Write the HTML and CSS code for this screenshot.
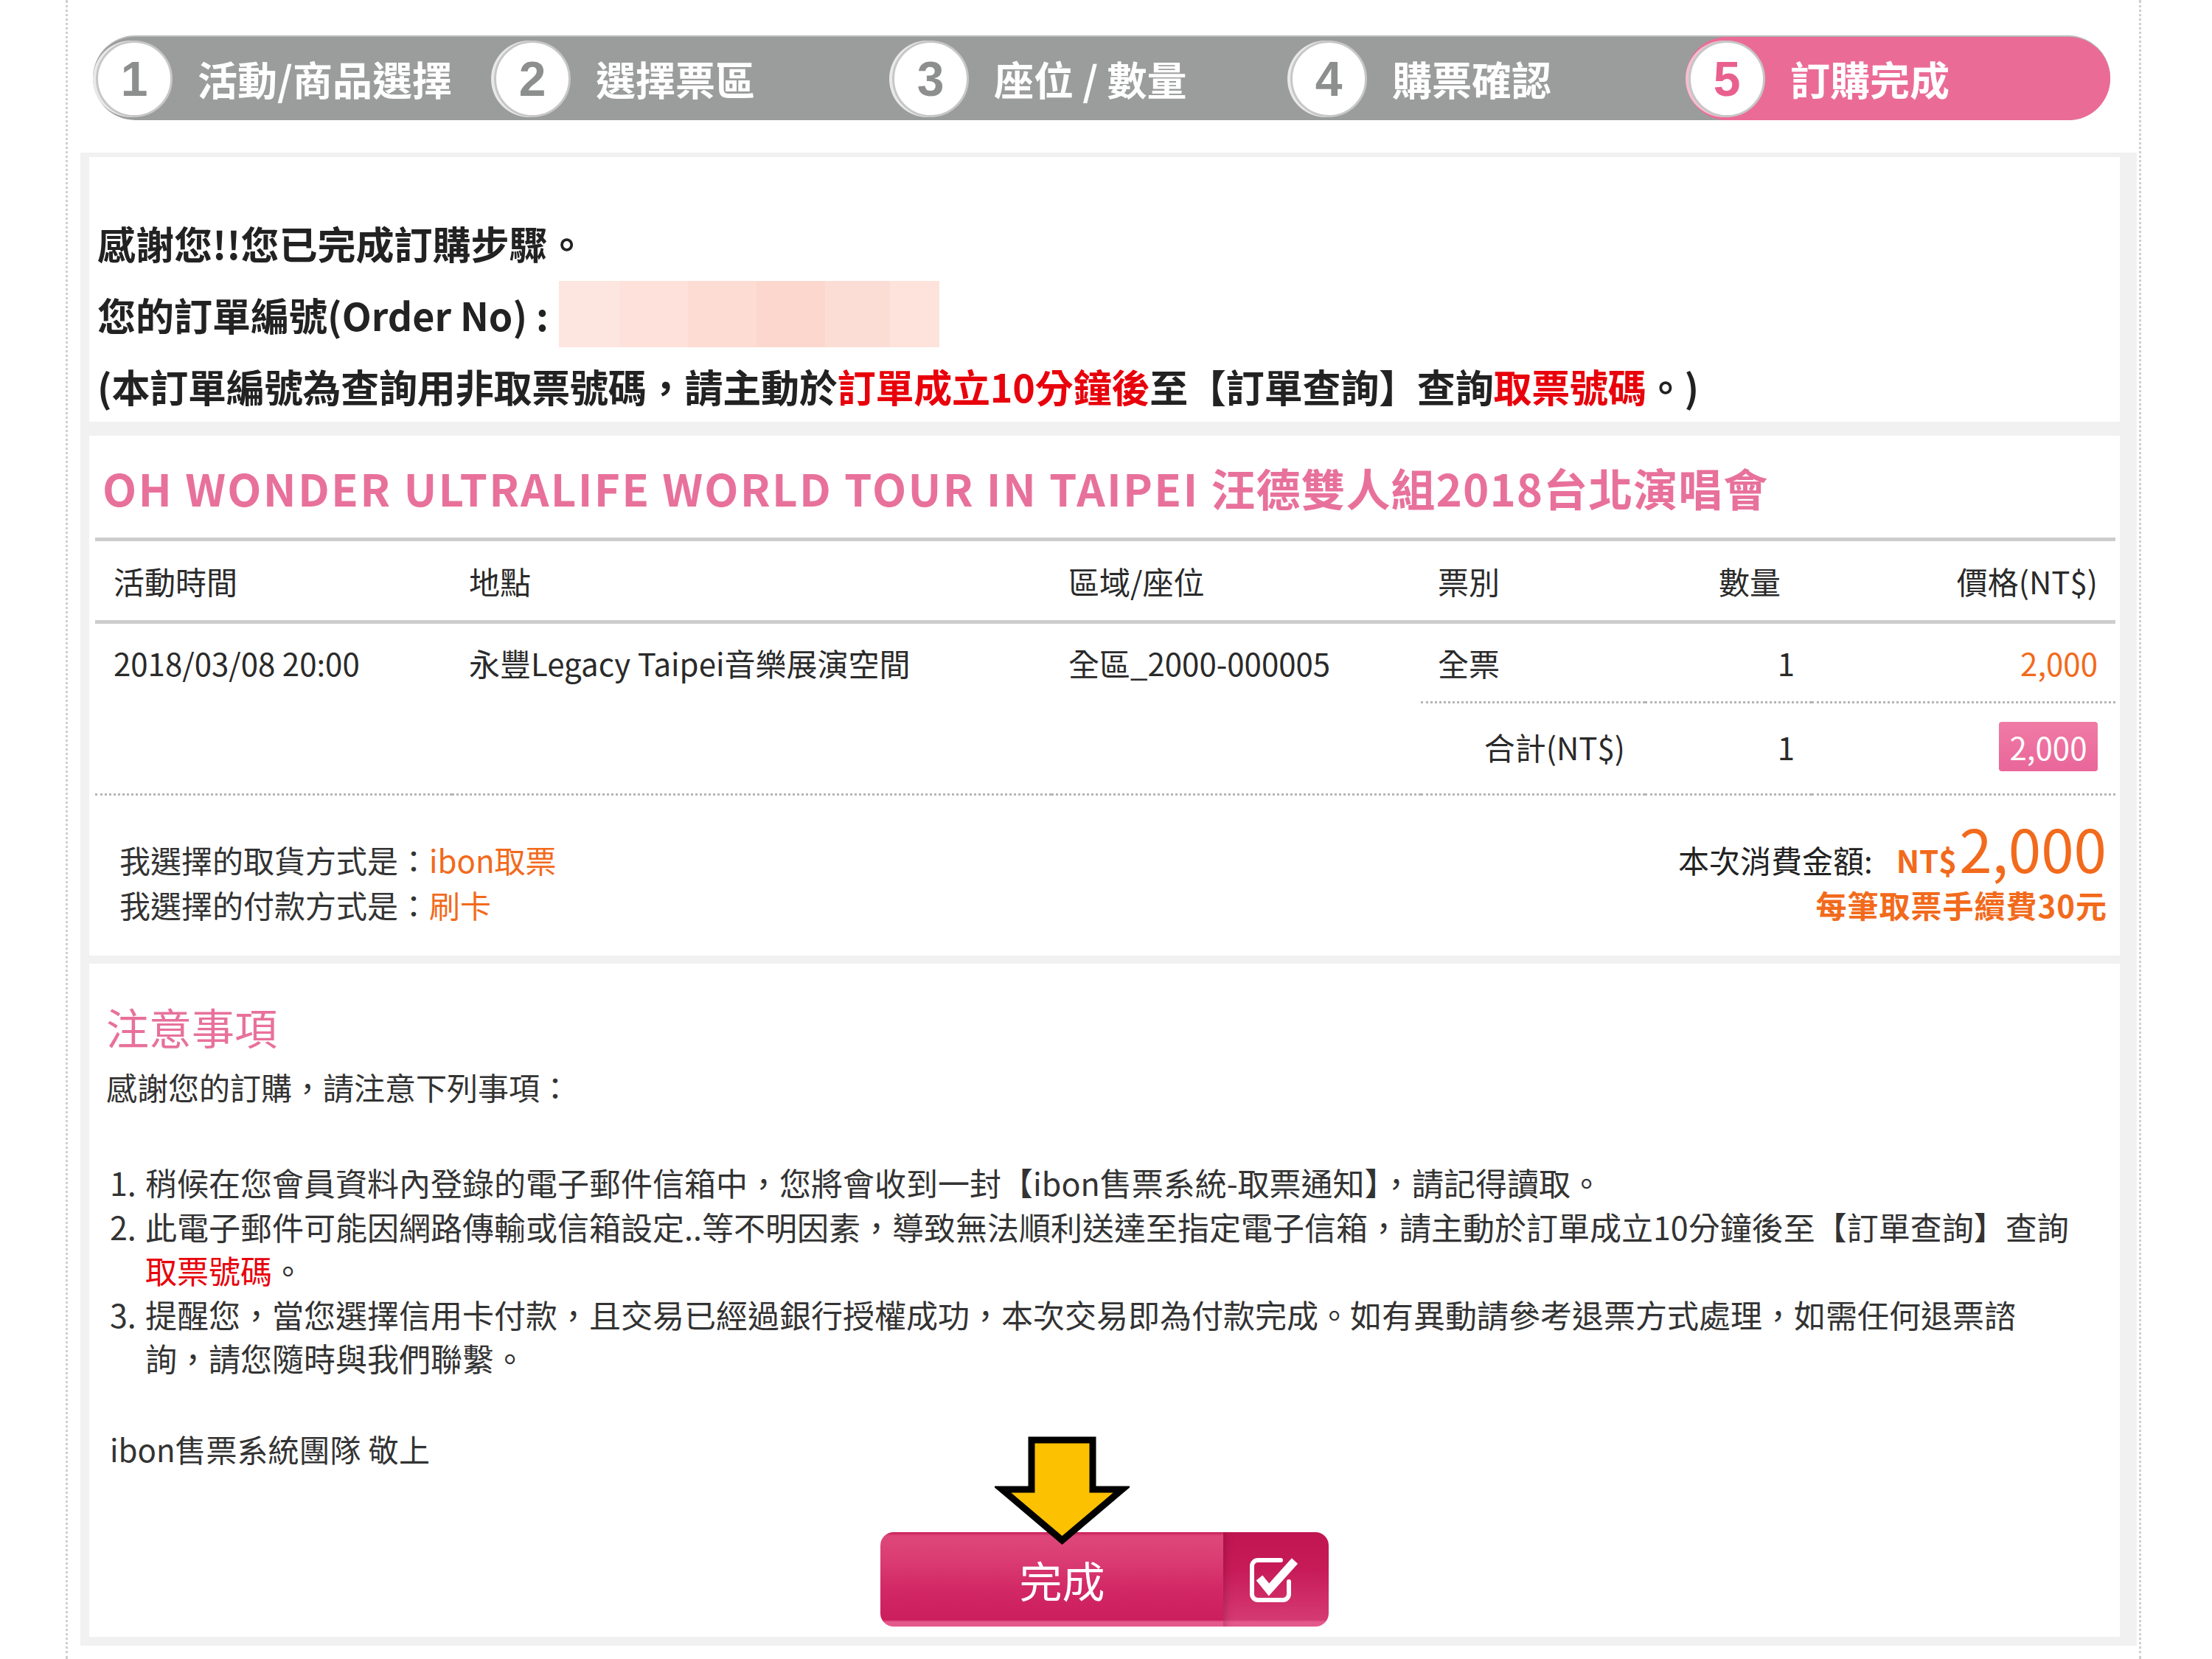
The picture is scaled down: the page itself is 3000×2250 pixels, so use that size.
FILE: index.html
```html
<!DOCTYPE html>
<html lang="zh-Hant">
<head>
<meta charset="utf-8">
<title>訂購完成</title>
<link rel="stylesheet" href="styles.css">
</head>
<body>
<div class="page">
  <ol class="steps">
    <li class="step"><span class="num">1</span><span class="label">活動/商品選擇</span></li>
    <li class="step"><span class="num">2</span><span class="label">選擇票區</span></li>
    <li class="step"><span class="num">3</span><span class="label">座位 / 數量</span></li>
    <li class="step"><span class="num">4</span><span class="label">購票確認</span></li>
    <li class="step active"><span class="num">5</span><span class="label">訂購完成</span></li>
  </ol>

  <div class="content">
    <section class="panel thanks">
      <p>感謝您!!您已完成訂購步驟。</p>
      <p>您的訂單編號(Order No) :<span class="order-no"></span></p>
      <p>(本訂單編號為查詢用非取票號碼，請主動於<em>訂單成立10分鐘後</em>至【訂單查詢】查詢<em>取票號碼</em>。)</p>
    </section>

    <section class="panel order">
      <h1 class="event-title"><span class="latin">OH WONDER ULTRALIFE WORLD TOUR IN TAIPEI </span><span class="cjk">汪德雙人組2018台北演唱會</span></h1>
      <div class="tickets">
        <div class="th c1">活動時間</div>
        <div class="th c2">地點</div>
        <div class="th c3">區域/座位</div>
        <div class="th c4">票別</div>
        <div class="th c5">數量</div>
        <div class="th c6">價格(NT$)</div>

        <div class="td c1">2018/03/08 20:00</div>
        <div class="td c2">永豐Legacy Taipei音樂展演空間</div>
        <div class="td c3">全區_2000-000005</div>
        <div class="td c4 dot">全票</div>
        <div class="td c5 dot">1</div>
        <div class="td c6 dot price">2,000</div>

        <div class="tt c1"></div>
        <div class="tt c2"></div>
        <div class="tt c3"></div>
        <div class="tt c4">合計(NT$)</div>
        <div class="tt c5">1</div>
        <div class="tt c6"><span class="total-box">2,000</span></div>
      </div>

      <div class="summary">
        <div class="methods">
          <div>我選擇的取貨方式是：<span class="val">ibon取票</span></div>
          <div>我選擇的付款方式是：<span class="val">刷卡</span></div>
        </div>
        <div class="pay-total">
          <div class="total-line"><span class="total-label">本次消費金額:</span><span class="nt">NT$</span><span class="amount">2,000</span></div>
          <div class="fee">每筆取票手續費30元</div>
        </div>
      </div>
    </section>

    <section class="panel notes">
      <h2 class="notes-title">注意事項</h2>
      <p class="intro">感謝您的訂購，請注意下列事項：</p>
      <ol class="notice-list">
        <li><span class="no">1.</span><span class="txt">稍候在您會員資料內登錄的電子郵件信箱中，您將會收到一封【ibon售票系統-取票通知】，請記得讀取。</span></li>
        <li><span class="no">2.</span><span class="txt">此電子郵件可能因網路傳輸或信箱設定..等不明因素，導致無法順利送達至指定電子信箱，請主動於訂單成立10分鐘後至【訂單查詢】查詢<br><em>取票號碼</em>。</span></li>
        <li><span class="no">3.</span><span class="txt">提醒您，當您選擇信用卡付款，且交易已經過銀行授權成功，本次交易即為付款完成。如有異動請參考退票方式處理，如需任何退票諮<br>詢，請您隨時與我們聯繫。</span></li>
      </ol>
      <p class="sign">ibon售票系統團隊 敬上</p>

      <div class="actions">
        <button class="done-btn" type="button">
          <span class="done-text">完成</span>
          <span class="done-icon">
            <svg width="72" height="66" viewBox="0 0 72 66">
              <path d="M44 7 H13 a8 8 0 0 0 -8 8 V53 a8 8 0 0 0 8 8 H47 a8 8 0 0 0 8 -8 V36" fill="none" stroke="#fff" stroke-width="6" stroke-linecap="round"/>
              <polyline points="15,31 28,47 63,8" fill="none" stroke="#fff" stroke-width="11" stroke-linejoin="miter"/>
            </svg>
          </span>
          <svg class="arrow" width="183" height="149" viewBox="0 0 183 149">
            <polygon points="50,5 133,5 133,72 173,72 91.5,141 10,72 50,72" fill="#fcc100" stroke="#000" stroke-width="9" stroke-linejoin="miter"/>
          </svg>
        </button>
      </div>
    </section>
  </div>
</div>
</body>
</html>
```

FILE: styles.css
```css
* { box-sizing: border-box; }

html, body {
  margin: 0;
  padding: 0;
  background: #fff;
}

body {
  font-family: "Noto Sans CJK TC", "Noto Sans", sans-serif;
  color: #2a2a2a;
}

p { margin: 0; }

.page {
  margin-left: 89px;
  width: 2815px;
  min-height: 2250px;
  border-left: 3px dotted #cfcfcf;
  border-right: 3px dotted #cfcfcf;
  padding-top: 48px;
}

/* ---------- stepper ---------- */
.steps {
  list-style: none;
  margin: 0 0 0 34px;
  padding: 0;
  width: 2736px;
  height: 115px;
  display: flex;
  background: #9b9d9c;
  border-radius: 58px;
  border-top: 2px solid #b9bbba;
}

.step {
  flex: 0 0 540px;
  display: flex;
  align-items: center;
  height: 113px;
  padding-left: 4px;
}

.step.active {
  flex: 1 1 auto;
  background: #eb6b97;
  border-radius: 58px;
}

.num {
  flex: none;
  width: 104px;
  height: 104px;
  border-radius: 50%;
  background: #fff;
  border: 3px solid #c6c7c6;
  box-shadow: -4px 0 0 0 #e9e9e9;
  display: flex;
  align-items: center;
  justify-content: center;
  font-family: "Liberation Sans", Arial, sans-serif;
  font-weight: 700;
  font-size: 66px;
  color: #8d8f8e;
}

.step.active .num { color: #e9608e; box-shadow: -4px 0 0 0 #f4bfd2; }

.label {
  margin-left: 34px;
  color: #fff;
  font-weight: 700;
  font-size: 54px;
  line-height: 1;
  white-space: nowrap;
}

/* ---------- content ---------- */
.content {
  margin: 44px 3px 0 17px;
  background: #f1f1f1;
  padding: 6px 23px 12px 12px;
}

.panel { background: #fff; }
.order { margin-top: 19px; }
.notes { margin-top: 11px; }

em { font-style: normal; color: #e8000b; }

.thanks {
  padding: 68px 0 0 11px;
  font-size: 52px;
  font-weight: 700;
  line-height: 97px;
  color: #222;
  white-space: nowrap;
}

.thanks p:last-child { letter-spacing: -0.2px; }

.order-no {
  display: inline-block;
  width: 516px;
  height: 90px;
  margin-left: 14px;
  vertical-align: -22px;
  background: linear-gradient(90deg,
    #fde6df 0 16%, #fde1da 16% 34%, #fcdcd3 34% 52%,
    #fcd7cd 52% 70%, #fcddd5 70% 87%, #fde3dc 87% 100%);
}

/* ---------- order ---------- */
.event-title {
  margin: 0;
  padding: 30px 0 0 18px;
  font-size: 60px;
  line-height: 80px;
  font-weight: 700;
  color: #e8719b;
  white-space: nowrap;
}

.event-title .latin { letter-spacing: 2.3px; }
.event-title .cjk { letter-spacing: 1px; }

.tickets {
  display: grid;
  grid-template-columns: 484px 813px 501px 304px 226px 412px;
  width: 2740px;
  margin: 28px 0 0 8px;
  font-size: 42px;
  color: #2a2a2a;
}

.th, .td, .tt {
  display: flex;
  align-items: center;
  padding-left: 23px;
  white-space: nowrap;
}

.th {
  height: 117px;
  border-top: 5px solid #cdcdcd;
  border-bottom: 5px solid #cdcdcd;
}

.td { height: 108px; padding-bottom: 3px; }
.td.dot { border-bottom: 3px dotted #b5b5b5; padding-bottom: 0; }

.tt {
  height: 125px;
  border-bottom: 3px dotted #b5b5b5;
  padding-bottom: 6px;
}

.c1 { padding-left: 25px; }
.th.c5 { justify-content: flex-end; padding-right: 42px; }
.td.c5, .tt.c5 { justify-content: flex-end; padding-right: 23px; }
.c6 { justify-content: flex-end; padding-right: 24px; }
.tt.c4 { justify-content: flex-end; padding-right: 27px; }

.price { color: #f26a1c; }

.total-box {
  display: inline-block;
  width: 134px;
  height: 67px;
  line-height: 67px;
  text-align: center;
  color: #fff;
  border-radius: 4px;
  background: linear-gradient(#f07ba5, #e9669a);
}

.summary {
  display: flex;
  justify-content: space-between;
  margin-top: 56px;
  padding: 0 18px 39px 41px;
  font-size: 42px;
  line-height: 61px;
  color: #333;
}

.val { color: #f26a1c; }

.pay-total { text-align: right; }

.total-line { white-space: nowrap; }
.total-label { color: #222; margin-right: 32px; }
.nt { color: #f26a1c; font-weight: 700; }
.amount {
  font-size: 80px;
  line-height: 0;
  color: #f26a1c;
  margin-left: 3px;
}

.fee {
  color: #f26a1c;
  font-weight: 700;
  letter-spacing: 1px;
  margin-right: -1px;
}

/* ---------- notes ---------- */
.notes {
  padding: 45px 0 14px 23px;
  color: #333;
}

.notes-title {
  margin: 0;
  font-size: 58px;
  line-height: 80px;
  font-weight: 400;
  color: #e8719b;
}

.intro {
  margin-top: 12px;
  font-size: 42px;
  line-height: 60px;
}

.notice-list {
  list-style: none;
  margin: 70px 0 0 0;
  padding: 0 0 0 5px;
  font-size: 43px;
  line-height: 59.5px;
}

.notice-list li { display: flex; }
.notice-list .no { flex: none; width: 48px; }
.notice-list .txt { white-space: nowrap; }

.sign {
  margin-top: 63px;
  padding-left: 5px;
  font-size: 42px;
  line-height: 60px;
}

.actions {
  display: flex;
  justify-content: center;
  margin: 83px 0 0 -23px;
}

.done-btn {
  position: relative;
  display: flex;
  width: 608px;
  height: 128px;
  padding: 0;
  border: 0;
  background: transparent;
  font: inherit;
  cursor: pointer;
}

.done-text {
  flex: 0 0 465px;
  display: flex;
  align-items: center;
  justify-content: center;
  padding-left: 28px;
  border-radius: 18px 0 0 18px;
  font-size: 58px;
  color: #fff;
  background: linear-gradient(to bottom,
    #c61d57 0, #de477a 4%, #da3c72 30%, #d22865 60%,
    #cc1e5d 93%, #e4598c 95%, #e4598c 100%);
}

.done-icon {
  flex: 1 1 auto;
  display: flex;
  align-items: center;
  justify-content: center;
  padding-right: 4px;
  border-radius: 0 18px 18px 0;
  background: linear-gradient(to bottom,
    #c01551 0, #c71b58 40%, #d53a72 93%, #e4598c 95%, #e4598c 100%);
  box-shadow: inset 12px 0 10px -8px rgba(90, 0, 30, 0.25);
}

.arrow {
  position: absolute;
  left: 155px;
  top: -130px;
  z-index: 2;
}
```
